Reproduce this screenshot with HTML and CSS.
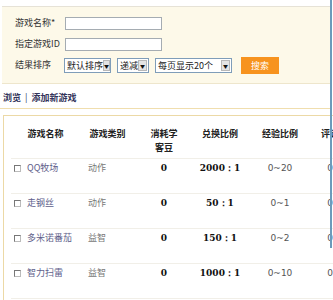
FILE: index.html
```html
<!DOCTYPE html>
<html>
<head>
<meta charset="utf-8">
<link rel="stylesheet" href="styles.css">
</head>
<body>
    <div class="page">
        <div class="search">
            <span class="label">游戏名称*</span>
            <span class="field"><span class="input"></span></span>

            <span class="label">指定游戏ID</span>
            <span class="field"><span class="input"></span></span>

            <span class="label">结果排序</span>
            <span class="field">
                <span class="select s1"><span class="val">默认排序</span><span class="arrow">▼</span></span>
                <span class="select s2"><span class="val">递减</span><span class="arrow">▼</span></span>
                <span class="select s3"><span class="val">每页显示20个</span><span class="arrow">▼</span></span>
                <span class="btn">搜索</span>
            </span>
        </div>

        <div class="links">
            <a>浏览</a> <span class="sep">|</span> <a>添加新游戏</a>
        </div>

        <div class="box">
            <table class="list">
                <colgroup>
                    <col class="c1"><col class="c2"><col class="c3">
                    <col class="c4"><col class="c5"><col class="c6">
                </colgroup>
                <thead>
                    <tr>
                        <th>游戏名称</th>
                        <th>游戏类别</th>
                        <th>消耗学<br>客豆</th>
                        <th>兑换比例</th>
                        <th>经验比例</th>
                        <th>评论</th>
                    </tr>
                </thead>
                <tbody>
                    <tr>
                        <td class="name"><span class="check"></span>QQ牧场</td>
                        <td class="kind">动作</td>
                        <td class="num">0</td>
                        <td class="num">2000：1</td>
                        <td class="exp">0~20</td>
                        <td class="exp">0</td>
                    </tr>
                    <tr>
                        <td class="name"><span class="check"></span>走钢丝</td>
                        <td class="kind">动作</td>
                        <td class="num">0</td>
                        <td class="num">50：1</td>
                        <td class="exp">0~1</td>
                        <td class="exp">0</td>
                    </tr>
                    <tr>
                        <td class="name"><span class="check"></span>多米诺番茄</td>
                        <td class="kind">益智</td>
                        <td class="num">0</td>
                        <td class="num">150：1</td>
                        <td class="exp">0~2</td>
                        <td class="exp">0</td>
                    </tr>
                    <tr>
                        <td class="name"><span class="check"></span>智力扫雷</td>
                        <td class="kind">益智</td>
                        <td class="num">0</td>
                        <td class="num">1000：1</td>
                        <td class="exp">0~10</td>
                        <td class="exp">0</td>
                    </tr>
                </tbody>
            </table>
        </div>

        <div class="edge"></div>
    </div>
</body>
</html>
```

FILE: styles.css
```css
html, body {
    margin: 0;
    padding: 0;
    overflow: hidden;
    background: #fff;
}
body {
    font-family: "Noto Sans CJK SC", "DejaVu Sans", sans-serif;
    font-size: 9px;
    color: #333;
}
.page {
    position: relative;
    width: 333px;
    height: 300px;
    overflow: hidden;
}
.edge {
    position: absolute;
    left: 330px;
    top: 0;
    width: 2px;
    height: 248px;
    background: #6c9bbb;
}

/* search panel */
.search {
    margin: 6px 2px 0 2px;
    height: 67px;
    padding: 9px 0 0 13px;
    background: #fdf9e9;
    border-top: 1px solid #e6e2d6;
    border-bottom: 1px solid #eee6cc;
    display: grid;
    grid-template-columns: 50px auto;
    grid-auto-rows: 14px;
    row-gap: 7px;
    align-items: center;
}
.label {
    line-height: 14px;
    white-space: nowrap;
}
.field {
    display: flex;
    align-items: center;
}
.input {
    display: block;
    width: 95px;
    height: 11px;
    background: #fff;
    border: 1px solid #a5acb2;
}
.select {
    display: flex;
    align-items: center;
    height: 13px;
    border: 1px solid #7f9db9;
    background: #fff;
    margin-right: 6px;
    color: #222;
    line-height: 13px;
}
.select .val {
    flex: 1;
    padding-left: 2px;
    white-space: nowrap;
}
.select .arrow {
    width: 9px;
    height: 11px;
    margin-right: 1px;
    background: #e4e4e4;
    border: 1px solid #b8b8b8;
    box-sizing: border-box;
    font-size: 5px;
    line-height: 10px;
    text-align: center;
    color: #111;
}
.s1 { width: 45px; margin-left: -1px; }
.s2 { width: 30px; }
.s3 { width: 75px; }
.btn {
    display: block;
    width: 38px;
    height: 17px;
    margin-left: 3px;
    background: #f7931e;
    color: #fff;
    line-height: 17px;
    text-align: center;
}

/* links */
.links {
    margin-top: 8px;
    padding: 0 0 4px 3px;
    line-height: 12px;
    border-bottom: 1px solid #f0deae;
    width: 328px;
    font-weight: bold;
    color: #33335a;
}
.links .sep {
    font-weight: normal;
    margin: 0 2px;
}

/* list */
.box {
    margin: 6px 0 0 3px;
    padding-left: 7px;
    border-top: 1px solid #ecd9a6;
    border-left: 1px solid #ecd9a6;
    height: 200px;
}
.list {
    table-layout: fixed;
    width: 336px;
    border-collapse: collapse;
}
.c1 { width: 69px; }
.c2 { width: 55px; }
.c3 { width: 58px; }
.c4 { width: 54px; }
.c5 { width: 66px; }
.c6 { width: 34px; }
.list th {
    font-weight: bold;
    color: #222;
    line-height: 14px;
    padding: 11px 0 3px;
    vertical-align: top;
    text-align: center;
    white-space: nowrap;
    border-bottom: 1px solid #f1efe8;
}
.list td {
    line-height: 12px;
    padding: 3px 0 19px;
    vertical-align: top;
    white-space: nowrap;
    border-bottom: 1px solid #f1efe8;
}
.list .name {
    padding-left: 3px;
    color: #5e5e8a;
}
.check {
    display: inline-block;
    width: 5px;
    height: 5px;
    margin: 0 6px 1px 0;
    vertical-align: middle;
    border: 1px solid #777;
    border-right-color: #bbb;
    border-bottom-color: #bbb;
    background: #fff;
}
.list .kind {
    padding-left: 8px;
    color: #777;
}
.list .num {
    text-align: center;
    font-family: "DejaVu Serif", serif;
    font-weight: bold;
    color: #111;
}
.list .exp {
    text-align: center;
    font-family: "DejaVu Sans", sans-serif;
    color: #555;
}
```
